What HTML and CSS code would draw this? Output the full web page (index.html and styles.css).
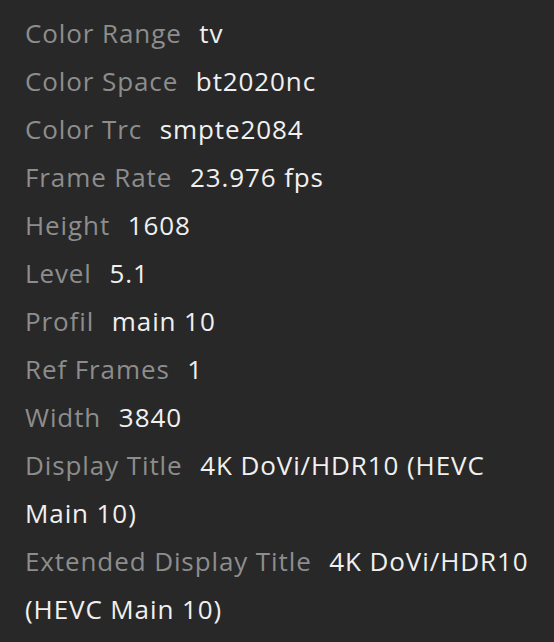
FILE: index.html
```html
<!DOCTYPE html>
<html lang="en">
<head>
  <meta charset="UTF-8">
  <meta name="viewport" content="width=device-width, initial-scale=1.0">
  <title>Media Info</title>
  <link rel="stylesheet" href="styles.css">
</head>
<body>
  <div class="info">
    <div class="row"><span class="label">Color Range</span> <span class="value">tv</span></div>
    <div class="row"><span class="label">Color Space</span> <span class="value">bt2020nc</span></div>
    <div class="row"><span class="label">Color Trc</span> <span class="value">smpte2084</span></div>
    <div class="row"><span class="label">Frame Rate</span> <span class="value">23.976 fps</span></div>
    <div class="row"><span class="label">Height</span> <span class="value">1608</span></div>
    <div class="row"><span class="label">Level</span> <span class="value">5.1</span></div>
    <div class="row"><span class="label">Profil</span> <span class="value">main 10</span></div>
    <div class="row"><span class="label">Ref Frames</span> <span class="value">1</span></div>
    <div class="row"><span class="label">Width</span> <span class="value">3840</span></div>
    <div class="row"><span class="label">Display Title</span> <span class="value">4K DoVi/HDR10 (HEVC Main 10)</span></div>
    <div class="row"><span class="label">Extended Display Title</span> <span class="value">4K DoVi/HDR10 (HEVC Main 10)</span></div>
  </div>
</body>
</html>
```

FILE: styles.css
```css
body {
  margin: 0;
  padding: 0;
  background-color: #282828;
  font-family: "Open Sans", sans-serif;
}

.info {
  padding: 9px 14px 0 25px;
}

.row {
  font-size: 26px;
  line-height: 48px;
  letter-spacing: 0.9px;
}

.label {
  color: #8d8d8d;
  margin-right: 10px;
}

.value {
  color: #f0f0f0;
}
```
